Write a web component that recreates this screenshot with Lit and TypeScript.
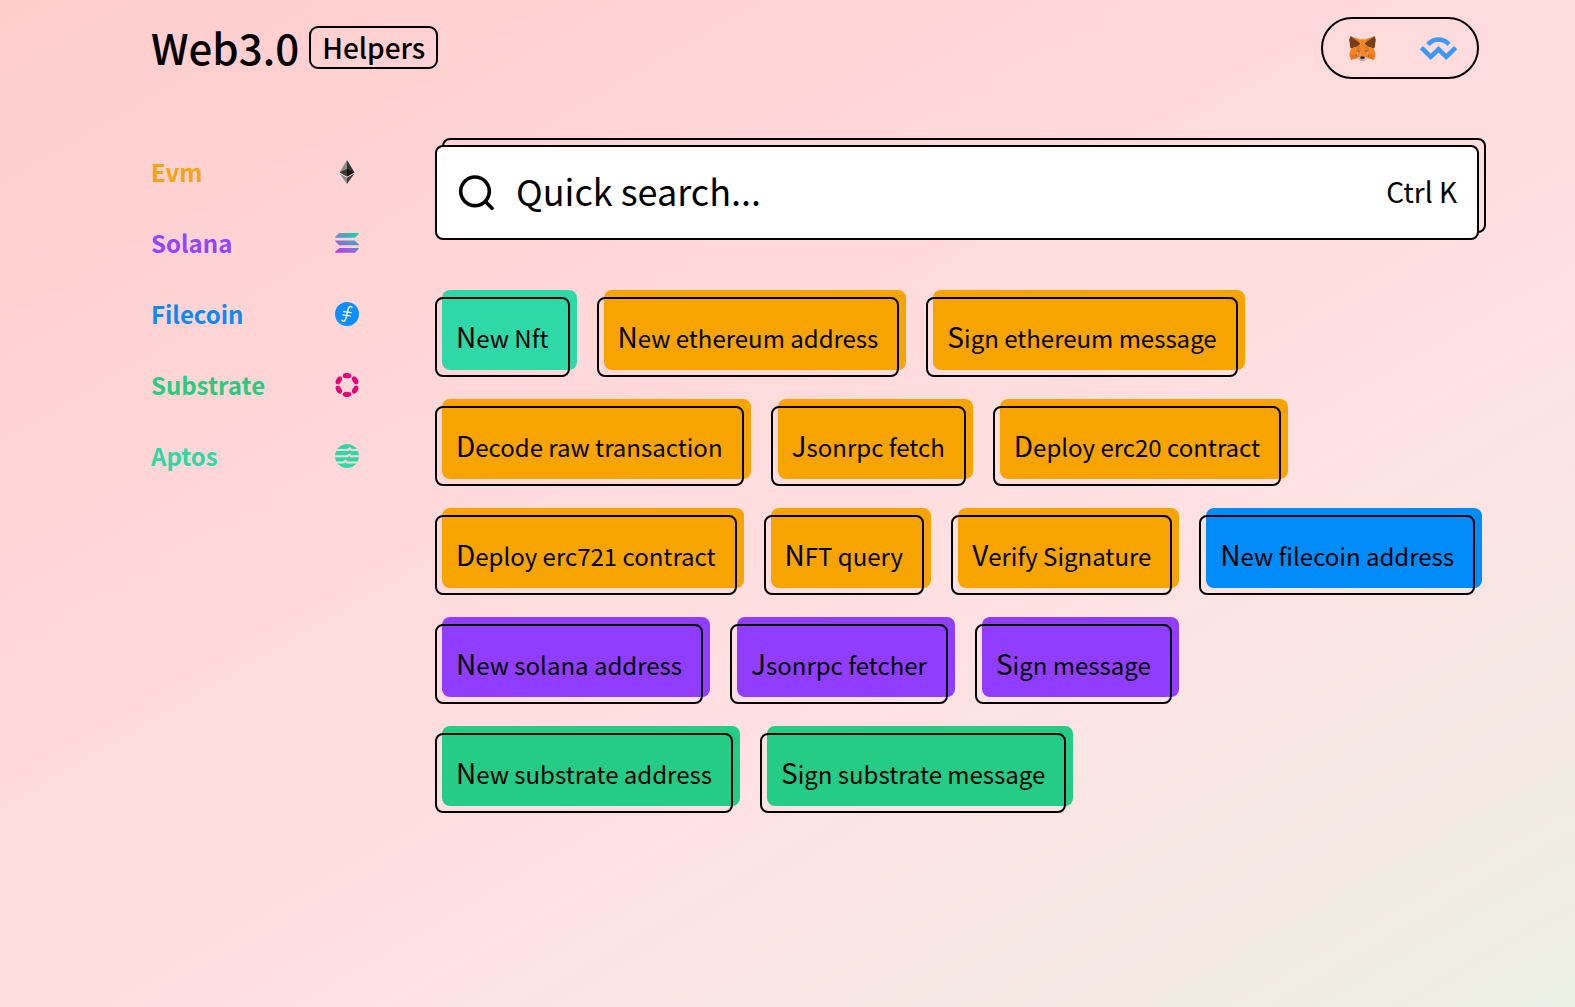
import { LitElement, html, css, svg } from "lit";
import { customElement, state } from "lit/decorators.js";
import { classMap } from "lit/directives/class-map.js";

type Chain = "evm" | "solana" | "filecoin" | "substrate" | "aptos";

const CHAINS: { id: Chain; label: string }[] = [
  { id: "evm", label: "Evm" },
  { id: "solana", label: "Solana" },
  { id: "filecoin", label: "Filecoin" },
  { id: "substrate", label: "Substrate" },
  { id: "aptos", label: "Aptos" },
];

const HELPERS: { chain: Chain; label: string }[] = [
  { chain: "aptos", label: "New Nft" },
  { chain: "evm", label: "New ethereum address" },
  { chain: "evm", label: "Sign ethereum message" },
  { chain: "evm", label: "Decode raw transaction" },
  { chain: "evm", label: "Jsonrpc fetch" },
  { chain: "evm", label: "Deploy erc20 contract" },
  { chain: "evm", label: "Deploy erc721 contract" },
  { chain: "evm", label: "NFT query" },
  { chain: "evm", label: "Verify Signature" },
  { chain: "filecoin", label: "New filecoin address" },
  { chain: "solana", label: "New solana address" },
  { chain: "solana", label: "Jsonrpc fetcher" },
  { chain: "solana", label: "Sign message" },
  { chain: "substrate", label: "New substrate address" },
  { chain: "substrate", label: "Sign substrate message" },
];

const FOX: [string, string][] = [
  ["#e2761b", "274.1,35.5 174.6,109.4 193,65.8"],
  ["#e4761b", "44.4,35.5 143.1,110.1 125.6,65.8"],
  ["#e4761b", "238.3,206.8 211.8,247.4 268.5,263 284.8,207.7"],
  ["#e4761b", "33.9,207.7 50.1,263 106.8,247.4 80.3,206.8"],
  ["#e4761b", "103.6,138.2 87.8,162.1 144.1,164.6 142.1,104.1"],
  ["#e4761b", "214.9,138.2 175.9,103.4 174.6,164.6 230.8,162.1"],
  ["#e4761b", "106.8,247.4 140.6,230.9 111.4,208.1"],
  ["#e4761b", "177.9,230.9 211.8,247.4 207.1,208.1"],
  ["#d7c1b3", "211.8,247.4 177.9,230.9 180.6,253 180.3,262.3"],
  ["#d7c1b3", "106.8,247.4 138.3,262.3 138.1,253 140.6,230.9"],
  ["#cd6116", "106.8,247.4 111.6,206.8 80.3,207.7"],
  ["#cd6116", "207,206.8 211.8,247.4 238.3,207.7"],
  ["#cd6116", "230.8,162.1 174.6,164.6 179.8,193.5 188.1,176.1 208.1,185.2"],
  ["#cd6116", "110.6,185.2 130.6,176.1 138.8,193.5 144.1,164.6 87.8,162.1"],
  ["#e4751f", "87.8,162.1 111.4,208.1 110.6,185.2"],
  ["#e4751f", "208.1,185.2 207.1,208.1 230.8,162.1"],
  ["#e4751f", "144.1,164.6 138.8,193.5 145.4,227.6 146.9,182.7"],
  ["#e4751f", "174.6,164.6 171.9,182.6 173.1,227.6 179.8,193.5"],
  ["#f6851b", "179.8,193.5 173.1,227.6 177.9,230.9 207.1,208.1 208.1,185.2"],
  ["#f6851b", "110.6,185.2 111.4,208.1 140.6,230.9 145.4,227.6 138.8,193.5"],
  ["#c0ad9e", "180.3,262.3 180.6,253 178.1,250.8 140.4,250.8 138.1,253 138.3,262.3 106.8,247.4 117.8,256.4 140.1,271.9 178.4,271.9 200.8,256.4 211.8,247.4"],
  ["#161616", "177.9,230.9 173.1,227.6 145.4,227.6 140.6,230.9 138.1,253 140.4,250.8 178.1,250.8 180.6,253"],
  ["#763d16", "278.3,114.2 286.8,73.4 274.1,35.5 177.9,106.9 214.9,138.2 267.2,153.5 278.8,140 273.8,136.4 281.8,129.1 275.6,124.3 283.6,118.2"],
  ["#763d16", "31.8,73.4 40.3,114.2 34.9,118.2 42.9,124.3 36.8,129.1 44.8,136.4 39.8,140 51.3,153.5 103.6,138.2 140.6,106.9 44.4,35.5"],
  ["#f6851b", "267.2,153.5 214.9,138.2 230.8,162.1 207.1,208.1 238.3,207.7 284.8,207.7"],
  ["#f6851b", "103.6,138.2 51.3,153.5 33.9,207.7 80.3,207.7 111.4,208.1 87.8,162.1"],
  ["#f6851b", "174.6,164.6 177.9,106.9 193.1,65.8 125.6,65.8 140.6,106.9 144.1,164.6 145.3,182.8 145.4,227.6 173.1,227.6 173.3,182.8"],
  ["#a8561f", "138.8,193.5 110.6,185.2 130.5,176.1"],
  ["#a8561f", "179.7,193.5 188,176.1 208,185.2"],
];

const foxIcon = html`<svg width="27" height="25" viewBox="31 35 257 238" aria-hidden="true">
  ${FOX.map(([fill, points]) => svg`<polygon fill=${fill} points=${points} />`)}
</svg>`;

const walletConnectIcon = html`<svg width="37" height="23" viewBox="0 0 300 185" aria-hidden="true">
  <path
    fill="#3b99fc"
    d="M61.44 36.26c48.91-47.89 128.21-47.89 177.12 0l5.89 5.76a6.04 6.04 0 0 1 0 8.67l-20.14 19.72a3.18 3.18 0 0 1-4.43 0l-8.1-7.93c-34.12-33.41-89.44-33.41-123.56 0l-8.68 8.49a3.18 3.18 0 0 1-4.43 0L54.98 51.22a6.04 6.04 0 0 1 0-8.67zM280.21 77.03l17.92 17.55a6.04 6.04 0 0 1 0 8.67l-80.81 79.12a6.36 6.36 0 0 1-8.86 0l-57.35-56.15a1.59 1.59 0 0 0-2.22 0L91.54 182.37a6.36 6.36 0 0 1-8.86 0L1.87 103.25a6.04 6.04 0 0 1 0-8.67l17.92-17.55a6.36 6.36 0 0 1 8.86 0L86 133.18a1.59 1.59 0 0 0 2.22 0l57.35-56.15a6.36 6.36 0 0 1 8.86 0l57.35 56.15a1.59 1.59 0 0 0 2.22 0l57.35-56.15a6.36 6.36 0 0 1 8.86 0z"
  />
</svg>`;

const searchIcon = html`<svg class="search-icon" width="40" height="40" viewBox="0 0 40 40" aria-hidden="true">
  <g fill="none" stroke="#000" stroke-width="3.6" stroke-linecap="round">
    <circle cx="18" cy="18.3" r="14.3" />
    <path d="M28.6 28.8l6.4 6.4" />
  </g>
</svg>`;

const CHAIN_ICONS: Record<Chain, unknown> = {
  evm: svg`
    <path fill="#343434" d="M12 0v16.4l7.4-4.2z" />
    <path fill="#8c8c8c" d="M12 0L4.6 12.2l7.4 4.2z" />
    <path fill="#141414" d="M12 8.9v7.5l7.4-4.2z" />
    <path fill="#393939" d="M12 8.9l-7.4 3.3 7.4 4.2z" />
    <path fill="#3c3c3b" d="M12 17.8V24l7.4-10.4z" />
    <path fill="#8c8c8c" d="M12 24v-6.2l-7.4-4.2z" />`,
  solana: svg`
    <defs>
      <linearGradient id="sol" gradientUnits="userSpaceOnUse" x1="20" y1="0" x2="7" y2="24">
        <stop offset="0" stop-color="#14d9a0" />
        <stop offset="0.5" stop-color="#6a8cc8" />
        <stop offset="1" stop-color="#c232f0" />
      </linearGradient>
    </defs>
    <g fill="url(#sol)">
      <path d="M4.6 2h18.6c.6 0 .9.6.5 1l-3.6 3.5c-.2.2-.4.3-.7.3H.8c-.6 0-.9-.6-.5-1l3.6-3.5c.2-.2.4-.3.7-.3z" />
      <path d="M.8 9.5h18.6c.3 0 .5.1.7.3l3.6 3.5c.4.4.1 1-.5 1H4.6c-.3 0-.5-.1-.7-.3L.3 10.5c-.4-.4-.1-1 .5-1z" />
      <path d="M4.6 17h18.6c.6 0 .9.6.5 1l-3.6 3.5c-.2.2-.4.3-.7.3H.8c-.6 0-.9-.6-.5-1l3.6-3.5c.2-.2.4-.3.7-.3z" />
    </g>`,
  filecoin: svg`
    <circle cx="12" cy="12" r="12" fill="#0d8ffb" />
    <g fill="none" stroke="#fff" stroke-linecap="round">
      <path stroke-width="1.4" d="M17 5.4c-.7-1.500-2.700-1.200-3.400.6-.8 1.900-1.400 5.600-2.300 9-.6 2.400-1.600 4.400-3.100 4.200-.8-.1-1.200-.5-1.400-1.100" />
      <path stroke-width="1.200" d="M8.600 9.600l7.600 1.100M7.900 12.900l7.600 1.100" />
    </g>`,
  substrate: svg`
    <g fill="#e6007a">
      <ellipse cx="12" cy="2.7" rx="4.3" ry="2.6" />
      <ellipse cx="12" cy="21.3" rx="4.3" ry="2.6" />
      <ellipse cx="3.8" cy="7.4" rx="4.3" ry="2.6" transform="rotate(-60 3.8 7.4)" />
      <ellipse cx="20.2" cy="7.4" rx="4.3" ry="2.6" transform="rotate(60 20.2 7.4)" />
      <ellipse cx="3.8" cy="16.6" rx="4.3" ry="2.6" transform="rotate(60 3.8 16.6)" />
      <ellipse cx="20.2" cy="16.6" rx="4.3" ry="2.6" transform="rotate(-60 20.2 16.6)" />
    </g>`,
  aptos: svg`
    <mask id="aptos-waves">
      <rect width="24" height="24" fill="#fff" />
      <g fill="none" stroke="#000" stroke-width="2" stroke-linejoin="round">
        <path d="M-1 6H12.800l1.900-1.800 1.500 1.800H25" />
        <path d="M-1 12.300H12.500l1.900-1.800 1.500 1.800H25" />
        <path d="M-1 18.500H8.500l1.900-1.800 1.500 1.800H25" />
      </g>
    </mask>
    <circle cx="12" cy="12" r="12" fill="#2fd8a7" mask="url(#aptos-waves)" />`,
};

@customElement("app-root")
export class AppRoot extends LitElement {
  static styles = css`
    :host {
      display: block;
      box-sizing: border-box;
      min-height: 100vh;
      padding: 17px 96px 64px 151px;
      color: #000;
      font-family: "Noto Sans CJK SC", "Noto Sans", sans-serif;
      background: linear-gradient(150deg, #ffcccc 0%, #ffe1e3 63%, #ebefe4 100%);
    }
    *,
    *::before {
      box-sizing: border-box;
    }
    button,
    input {
      font: inherit;
      color: inherit;
      background: none;
      border: 0;
      margin: 0;
      padding: 0;
    }
    button {
      cursor: pointer;
    }
    svg {
      display: block;
      overflow: visible;
    }
    .header {
      display: flex;
      align-items: flex-start;
      justify-content: space-between;
      margin-bottom: 66px;
    }
    .brand {
      display: flex;
      align-items: center;
      gap: 10px;
      margin: 0;
      font-size: 42px;
      font-weight: 500;
      line-height: 60px;
    }
    .badge {
      padding: 0 11px;
      border: 2px solid #000;
      border-radius: 9px;
      font-size: 28px;
      line-height: 39px;
    }
    .wallets {
      display: flex;
      align-items: center;
      height: 62px;
      padding: 0 20px;
      gap: 38px;
      border: 2px solid #000;
      border-radius: 31px;
    }
    .wallet {
      display: grid;
      place-items: center;
      width: 38px;
      height: 38px;
    }
    .body {
      display: grid;
      grid-template-columns: 208px minmax(0, 1fr);
      column-gap: 76px;
      align-items: start;
    }
    .nav {
      display: grid;
      gap: 35px;
      padding-top: 9px;
    }
    .chain {
      display: flex;
      align-items: center;
      justify-content: space-between;
      font-size: 24px;
      font-weight: 700;
      line-height: 36px;
      text-decoration: none;
    }
    .chain.evm { color: #f5a40b; }
    .chain.solana { color: #9245fa; }
    .chain.filecoin { color: #1089ee; }
    .chain.substrate { color: #2cc980; }
    .chain.aptos { color: #32d6a5; }
    .search-shell {
      position: relative;
      margin-bottom: 57px;
    }
    .search-shell::before {
      content: "";
      position: absolute;
      inset: -7px -7px 7px 7px;
      border: 2px solid #000;
      border-radius: 8px;
    }
    .search {
      position: relative;
      display: flex;
      align-items: center;
      height: 95px;
      padding: 0 20px;
      border: 2px solid #000;
      border-radius: 8px;
      background: #fff;
    }
    .search-icon {
      flex: none;
      margin-right: 19px;
    }
    .field {
      flex: 1;
      min-width: 0;
      height: 60px;
      padding-bottom: 5px;
      font-size: 36px;
      outline: none;
    }
    .field::placeholder {
      color: #000;
      opacity: 1;
    }
    .shortcut {
      padding-bottom: 4px;
      font-family: inherit;
      font-size: 28px;
      line-height: 40px;
    }
    .helpers {
      display: flex;
      flex-wrap: wrap;
      gap: 29px 27px;
      isolation: isolate;
    }
    .helper {
      position: relative;
      height: 80px;
      padding: 0 19px;
      border: 2px solid #000;
      border-radius: 8px;
      font-size: 24px;
      line-height: 74px;
      white-space: nowrap;
    }
    .label {
      display: block;
      padding-bottom: 2px;
    }
    .label::first-letter {
      font-size: 28px;
    }
    .helper::before {
      content: "";
      position: absolute;
      z-index: -1;
      inset: -9px -9px 5px 5px;
      border-radius: 8px;
      background: #f7a400;
    }
    .helper.solana::before { background: #913dff; }
    .helper.filecoin::before { background: #008cfa; }
    .helper.substrate::before { background: #25cc85; }
    .helper.aptos::before { background: #2fd8a7; }
  `;

  @state() private query = "";

  private onInput(e: Event) {
    this.query = (e.target as HTMLInputElement).value;
  }

  render() {
    const q = this.query.trim().toLowerCase();
    const shown = HELPERS.filter((h) => h.label.toLowerCase().includes(q));
    return html`
      <header class="header">
        <h1 class="brand">Web3.0 <span class="badge">Helpers</span></h1>
        <div class="wallets">
          <button class="wallet" type="button" aria-label="MetaMask">${foxIcon}</button>
          <button class="wallet" type="button" aria-label="WalletConnect">${walletConnectIcon}</button>
        </div>
      </header>
      <div class="body">
        <nav class="nav">
          ${CHAINS.map(
            (c) => html`<a class=${classMap({ chain: true, [c.id]: true })} href="#${c.id}">
              <span>${c.label}</span>
              <svg width="24" height="24" viewBox="0 0 24 24" aria-hidden="true">${CHAIN_ICONS[c.id]}</svg>
            </a>`
          )}
        </nav>
        <main>
          <div class="search-shell">
            <label class="search">
              ${searchIcon}
              <input
                class="field"
                type="text"
                aria-label="Quick search"
                placeholder="Quick search..."
                .value=${this.query}
                @input=${this.onInput}
              />
              <kbd class="shortcut">Ctrl K</kbd>
            </label>
          </div>
          <div class="helpers">
            ${shown.map(
              (h) => html`<button type="button" class=${classMap({ helper: true, [h.chain]: true })}>
                <span class="label">${h.label}</span>
              </button>`
            )}
          </div>
        </main>
      </div>
    `;
  }
}
